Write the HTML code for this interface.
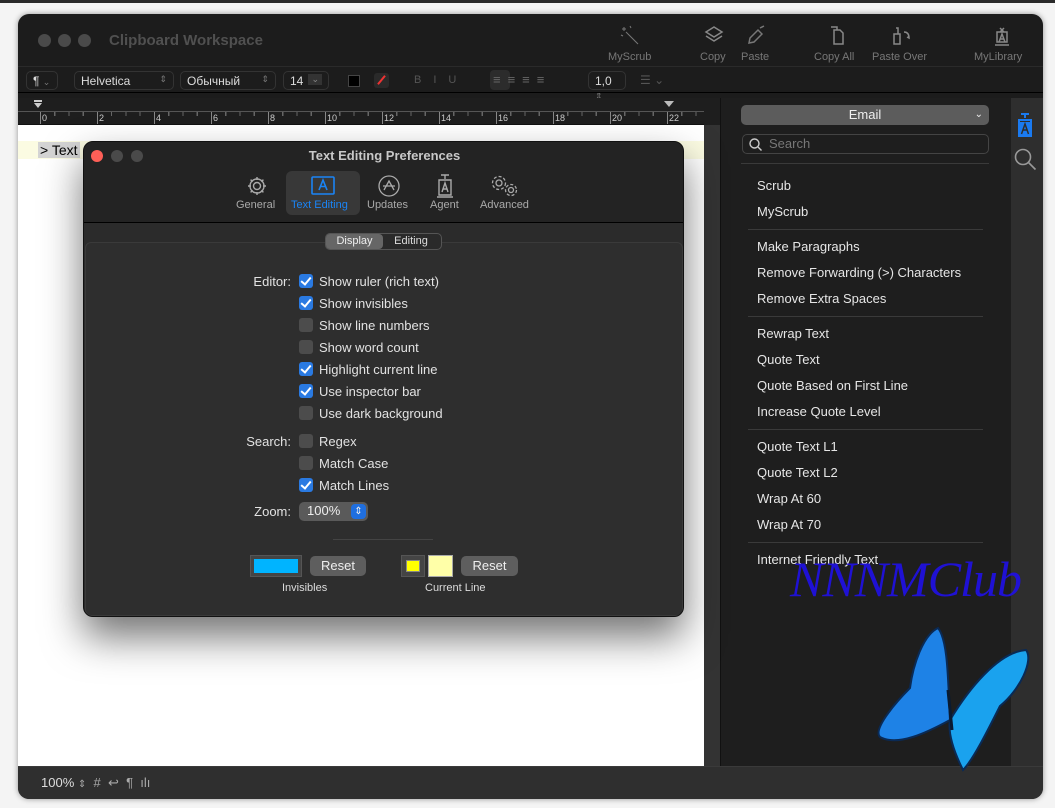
<!DOCTYPE html>
<html><head><meta charset="utf-8"><style>
*{box-sizing:border-box;margin:0;padding:0}
body{width:1055px;height:808px;background:#f4f4f4;position:relative;overflow:hidden;font-family:"Liberation Sans",sans-serif;color:#ddd}
.a{position:absolute}
.win{left:18px;top:14px;width:1025px;height:785px;border-radius:11px;background:#1c1c1c;overflow:hidden;box-shadow:0 0 6px rgba(0,0,0,.4)}
.tl{width:13px;height:13px;border-radius:50%;background:#4a4a4a}
.tb{font-size:11px;color:#777;text-align:center}
.ctl{border:1px solid #333;border-radius:5px;height:19px;font-size:12px;color:#ddd;padding:2px 6px;background:#1c1c1c}
.side div.i{font-size:13px;color:#e6e6e6;height:26px;line-height:26px;padding-left:36px}
.sep{height:1px;background:#3a3a3a;margin:4px 28px 4px 27px}
.cb{width:14px;height:14px;border-radius:3px;background:#4c4c4c;display:inline-block;vertical-align:-2px;margin-right:6px;position:relative}
.cb.on{background:#2a7ae2}
.cb.on:after{content:"";position:absolute;left:4px;top:1px;width:4px;height:8px;border:solid #fff;border-width:0 2px 2px 0;transform:rotate(40deg)}
.row{position:absolute;left:299px;font-size:13px;color:#e2e2e2}
.lab{position:absolute;font-size:13px;color:#e2e2e2;text-align:right;width:80px}
.btn{position:absolute;height:20px;background:#5e5e5e;border-radius:5px;font-size:13px;color:#eee;text-align:center;line-height:20px}
</style></head><body>
<div class="a" style="left:0;top:0;width:1055px;height:3px;background:#2a2a2a"></div>
<div class="a win">
  <div class="a tl" style="left:20px;top:20px"></div><div class="a tl" style="left:40px;top:20px"></div><div class="a tl" style="left:60px;top:20px"></div>
  <div class="a" style="left:91px;top:18px;font-size:15px;font-weight:bold;color:#505050">Clipboard Workspace</div>
  <div class="a tb" style="left:590px;top:37px">MyScrub</div>
  <div class="a tb" style="left:682px;top:37px">Copy</div>
  <div class="a tb" style="left:723px;top:37px">Paste</div>
  <div class="a tb" style="left:796px;top:37px">Copy All</div>
  <div class="a tb" style="left:854px;top:37px">Paste Over</div>
  <div class="a tb" style="left:956px;top:37px">MyLibrary</div>
  <svg class="a" style="left:600px;top:10px" width="24" height="24" stroke="#777" fill="none"><path d="M8 8l12 12M6 3v4M4 5h4M12 2l1 2M3 11l2 1"/></svg>
  <svg class="a" style="left:684px;top:10px" width="24" height="24" stroke="#888" fill="none" stroke-width="1.5"><path d="M12 3l8 5-8 5-8-5z M4 12l8 5 8-5"/></svg>
  <svg class="a" style="left:726px;top:10px" width="24" height="24" stroke="#777" fill="none" stroke-width="1.5"><path d="M6 14l8-8 4 4-8 8-5 1z M16 4l4-2"/></svg>
  <svg class="a" style="left:808px;top:10px" width="24" height="24" stroke="#888" fill="none" stroke-width="1.5"><path d="M8 6h6l3 3v11H8z M5 3h6v3"/></svg>
  <svg class="a" style="left:872px;top:10px" width="24" height="24" stroke="#888" fill="none" stroke-width="1.5"><path d="M4 10h6v10H4z M6 4h2v6 M14 8c4 0 5 3 5 6l-2-1"/></svg>
  <svg class="a" style="left:972px;top:10px" width="24" height="24" stroke="#888" fill="none" stroke-width="1.5"><path d="M7 8h10v10H7z M9 18l3-8 3 8 M10 15h4 M10 4l4 4M14 4l-4 4 M5 21h14"/></svg>
  <div class="a" style="left:0;top:52px;width:1025px;height:1px;background:#2a2a2a"></div>
  <div class="a ctl" style="left:8px;top:57px;width:32px">¶ <span style="color:#777;font-size:9px">⌄</span></div>
  <div class="a ctl" style="left:56px;top:57px;width:100px">Helvetica<span style="float:right;color:#777;font-size:9px">⇕</span></div>
  <div class="a ctl" style="left:162px;top:57px;width:96px">Обычный<span style="float:right;color:#777;font-size:9px">⇕</span></div>
  <div class="a ctl" style="left:265px;top:57px;width:46px">14<span style="float:right;background:#333;color:#888;font-size:9px;padding:0 3px">⌄</span></div>
  <div class="a" style="left:330px;top:61px;width:12px;height:12px;background:#000;border:1px solid #444"></div>
  <div class="a" style="left:356px;top:59px;width:15px;height:15px;background:#2a2a2a;border-radius:3px"><div style="margin:6px 2px;height:2px;background:#e33;transform:rotate(-50deg)"></div></div>
  <div class="a" style="left:396px;top:60px;font-size:11px;color:#555;letter-spacing:12px">BIU</div>
  <div class="a" style="left:472px;top:56px;width:20px;height:20px;background:#2c2c2c;border-radius:4px"></div>
  <div class="a" style="left:475px;top:58px;font-size:13px;color:#666;letter-spacing:7px">≡≡≡≡</div>
  <div class="a ctl" style="left:570px;top:57px;width:38px">1,0 <span style="color:#777;font-size:9px">⇕</span></div>
  <div class="a" style="left:622px;top:59px;font-size:12px;color:#555">☰ ⌄</div>
  <div class="a" style="left:0;top:78px;width:1025px;height:1px;background:#000"></div>
  <!-- ruler -->
  <div class="a" style="left:0;top:84px;width:702px;height:27px;background:#1e1e1e;border-bottom:1px solid #111">
    <div class="a" style="left:0;top:13px;width:702px;height:1px;background:#555"></div>
    <svg class="a" style="left:15px;top:2px" width="10" height="10"><path d="M1 0h8v2H1zM1 3h8l-4 5z" fill="#ccc"/></svg>
    <svg class="a" style="left:646px;top:3px" width="10" height="8"><path d="M0 0h10l-5 6z" fill="#bbb"/></svg>
    <div class="a" style="left:22px;top:14px;width:680px;height:4px;background:repeating-linear-gradient(90deg,#666 0 1px,transparent 1px 14.25px)"></div>
    <div class="a" style="left:22px;top:14px;width:680px;height:12px;background:repeating-linear-gradient(90deg,#888 0 1px,transparent 1px 57px)"></div>
    <div class="a" style="left:24px;top:15px;font-size:9px;color:#ccc">
      <span style="position:absolute;left:0">0</span><span style="position:absolute;left:57px">2</span><span style="position:absolute;left:114px">4</span><span style="position:absolute;left:171px">6</span><span style="position:absolute;left:228px">8</span><span style="position:absolute;left:285px">10</span><span style="position:absolute;left:342px">12</span><span style="position:absolute;left:399px">14</span><span style="position:absolute;left:456px">16</span><span style="position:absolute;left:513px">18</span><span style="position:absolute;left:570px">20</span><span style="position:absolute;left:627px">22</span>
    </div>
  </div>
  <div class="a" style="left:686px;top:84px;width:16px;height:27px;background:#1e1e1e"></div>
  <!-- editor -->
  <div class="a" style="left:0;top:111px;width:686px;height:641px;background:#fff"></div>
  <div class="a" style="left:0;top:127px;width:686px;height:18px;background:#fbfbe2"></div>
  <div class="a" style="left:20px;top:128px;background:#d4d4d4;color:#000;font-size:14px;padding:0 2px">&gt; Text</div>
  <div class="a" style="left:686px;top:111px;width:16px;height:641px;background:#333"></div>
  <div class="a" style="left:702px;top:84px;width:1px;height:668px;background:#111"></div>
  <!-- sidebar -->
  <div class="a side" style="left:703px;top:84px;width:290px;height:668px;background:#1e1e1e">
    <div style="margin:7px 0 0 20px;width:248px;height:20px;background:#5c5c5c;border-radius:5px;font-size:13px;color:#eee;text-align:center;line-height:20px;position:relative">Email<span style="position:absolute;right:6px;font-size:10px">⌄</span></div>
    <div style="margin:9px 0 0 21px;width:247px;height:20px;border:1px solid #444;border-radius:5px;font-size:13px;color:#777;line-height:18px;padding-left:26px;position:relative"><svg style="position:absolute;left:6px;top:3px" width="13" height="13" fill="none" stroke="#ccc" stroke-width="1.4"><circle cx="5.5" cy="5.5" r="4.5"/><path d="M9 9l3.5 3.5"/></svg>Search</div>
    <div class="sep" style="margin:9px 22px 9px 20px"></div>
    <div class="i">Scrub</div><div class="i">MyScrub</div>
    <div class="sep"></div>
    <div class="i">Make Paragraphs</div><div class="i">Remove Forwarding (&gt;) Characters</div><div class="i">Remove Extra Spaces</div>
    <div class="sep"></div>
    <div class="i">Rewrap Text</div><div class="i">Quote Text</div><div class="i">Quote Based on First Line</div><div class="i">Increase Quote Level</div>
    <div class="sep"></div>
    <div class="i">Quote Text L1</div><div class="i">Quote Text L2</div><div class="i">Wrap At 60</div><div class="i">Wrap At 70</div>
    <div class="sep"></div>
    <div class="i">Internet Friendly Text</div>
  </div>
  <div class="a" style="left:993px;top:84px;width:32px;height:668px;background:#2e2e2e"></div>
  <svg class="a" style="left:997px;top:98px" width="20" height="28"><path d="M6 2h8M10 2v4M4 8h12v16H4z" stroke="#1a7af0" stroke-width="2" fill="none"/><rect x="4" y="10" width="12" height="14" fill="#1a7af0"/><path d="M6.5 22l3.5-10 3.5 10M8 18h4" stroke="#2e2e2e" stroke-width="1.5" fill="none"/></svg>
  <svg class="a" style="left:996px;top:134px" width="24" height="24" fill="none" stroke="#999" stroke-width="1.6"><circle cx="9" cy="9" r="7.5"/><path d="M14.5 14.5l7 7"/></svg>
  <div class="a" style="left:0;top:752px;width:1025px;height:33px;background:#2f2f2f;border-top:1px solid #3a3a3a"></div>
  <div class="a" style="left:23px;top:761px;font-size:13px;color:#ddd">100% <span style="font-size:10px;color:#aaa">⇕</span> &nbsp;<span style="color:#aaa">#&nbsp; ↩&nbsp; ¶&nbsp; ılı</span></div>
</div>
<div class="a" style="left:790px;top:550px;font-family:'Liberation Serif',serif;font-style:italic;font-size:50px;color:#2010e8;opacity:.9;letter-spacing:-1px">NNNMClub</div>
<!-- butterfly -->
<svg class="a" style="left:868px;top:620px" width="175" height="160">
  <path d="M82 100C80 60 80 20 70 8C55 15 45 45 42 68C25 85 5 110 12 117C30 127 60 112 82 100z" fill="#1e82e6" stroke="#0a2a55" stroke-width="2"/>
  <path d="M82 100C100 70 130 32 158 30C166 40 152 70 132 86C120 110 105 140 95 150C85 130 80 112 82 100z" fill="#1aa2ee" stroke="#0a2a55" stroke-width="2"/>
  <path d="M80 70L84 110" stroke="#0a1a30" stroke-width="3"/>
</svg>
<!-- dialog -->
<div class="a" style="left:83px;top:141px;width:601px;height:476px;background:#2b2b2b;border:1px solid #111;border-radius:10px;box-shadow:0 20px 40px rgba(0,0,0,.55);overflow:hidden">
  <div class="a" style="left:0;top:0;width:601px;height:81px;background:#232323;border-bottom:1px solid #000"></div>
  <div class="a tl" style="left:7px;top:8px;width:12px;height:12px;background:#fe5f57"></div>
  <div class="a tl" style="left:27px;top:8px;width:12px;height:12px"></div>
  <div class="a tl" style="left:47px;top:8px;width:12px;height:12px"></div>
  <div class="a" style="left:0;top:6px;width:601px;text-align:center;font-size:13px;font-weight:bold;color:#c8c8c8">Text Editing Preferences</div>
  <div class="a" style="left:202px;top:29px;width:74px;height:44px;background:#383838;border-radius:6px"></div>
  <svg class="a" style="left:162px;top:33px" width="22" height="22" fill="none" stroke="#aaa" stroke-width="1.4"><circle cx="11" cy="11" r="3.5"/><path d="M11 2v3M11 17v3M2 11h3M17 11h3M4.6 4.6l2.1 2.1M15.3 15.3l2.1 2.1M4.6 17.4l2.1-2.1M15.3 6.7l2.1-2.1"/><circle cx="11" cy="11" r="7"/></svg>
  <svg class="a" style="left:227px;top:34px" width="24" height="20" fill="none" stroke="#1a84f5" stroke-width="1.6"><rect x="1" y="1" width="22" height="17" rx="1"/><path d="M8 14l4-10 4 10M9.5 10.5h5"/></svg>
  <svg class="a" style="left:293px;top:32px" width="24" height="24" fill="none" stroke="#aaa" stroke-width="1.3"><circle cx="12" cy="12" r="10"/><path d="M7 16l5-9 5 9M6 12h12"/></svg>
  <svg class="a" style="left:351px;top:31px" width="20" height="26" fill="none" stroke="#aaa" stroke-width="1.4"><path d="M6 2h8M10 2v4M4 7h12v15H4z M7 19l3-9 3 9M8 16h4M2 24h16"/></svg>
  <svg class="a" style="left:406px;top:32px" width="30" height="24" fill="none" stroke="#aaa" stroke-width="1.3"><circle cx="9" cy="9" r="3"/><circle cx="9" cy="9" r="6.5" stroke-dasharray="3 2"/><circle cx="21" cy="16" r="2.5"/><circle cx="21" cy="16" r="5.5" stroke-dasharray="3 2"/></svg>
  <div class="a" style="top:57px;left:152px;font-size:11px;color:#aaa">General</div>
  <div class="a" style="top:57px;left:207px;font-size:11px;color:#1a84f5">Text Editing</div>
  <div class="a" style="top:57px;left:283px;font-size:11px;color:#aaa">Updates</div>
  <div class="a" style="top:57px;left:346px;font-size:11px;color:#aaa">Agent</div>
  <div class="a" style="top:57px;left:396px;font-size:11px;color:#aaa">Advanced</div>
  <div class="a" style="left:1px;top:100px;width:598px;height:374px;background:#2e2e2e;border:1px solid #3a3a3a;border-radius:6px"></div>
  <div class="a" style="left:241px;top:91px;width:117px;height:17px;border:1px solid #555;border-radius:5px;background:#2a2a2a;font-size:11px;line-height:15px"><span style="display:inline-block;width:57px;height:15px;background:#666;border-radius:4px;text-align:center;color:#eee">Display</span><span style="display:inline-block;width:56px;text-align:center;color:#ddd">Editing</span></div>
</div>
<div class="lab" style="left:211px;top:274px">Editor:</div>
<div class="row" style="top:274px"><span class="cb on"></span>Show ruler (rich text)</div>
<div class="row" style="top:296px"><span class="cb on"></span>Show invisibles</div>
<div class="row" style="top:318px"><span class="cb"></span>Show line numbers</div>
<div class="row" style="top:340px"><span class="cb"></span>Show word count</div>
<div class="row" style="top:362px"><span class="cb on"></span>Highlight current line</div>
<div class="row" style="top:384px"><span class="cb on"></span>Use inspector bar</div>
<div class="row" style="top:406px"><span class="cb"></span>Use dark background</div>
<div class="lab" style="left:211px;top:434px">Search:</div>
<div class="row" style="top:434px"><span class="cb"></span>Regex</div>
<div class="row" style="top:456px"><span class="cb"></span>Match Case</div>
<div class="row" style="top:478px"><span class="cb on"></span>Match Lines</div>
<div class="lab" style="left:211px;top:504px">Zoom:</div>
<div class="a" style="left:299px;top:502px;width:69px;height:19px;background:#5a5a5a;border-radius:5px;font-size:13px;color:#eee;padding:1px 0 0 8px">100%<span style="position:absolute;right:2px;top:2px;width:15px;height:15px;background:#1f6fe0;border-radius:4px;font-size:10px;text-align:center;line-height:15px">⇕</span></div>
<div class="a" style="left:333px;top:539px;width:100px;height:1px;background:#444"></div>
<div class="a" style="left:250px;top:555px;width:52px;height:22px;border:1px solid #555;background:#444;padding:3px"><div style="width:44px;height:14px;background:#00b4ff"></div></div>
<div class="btn" style="left:310px;top:556px;width:56px">Reset</div>
<div class="a" style="left:282px;top:582px;font-size:11px;color:#ddd">Invisibles</div>
<div class="a" style="left:401px;top:555px;width:24px;height:22px;border:1px solid #555;background:#444;padding:4px"><div style="width:14px;height:12px;background:#ff0;border:1px solid #888"></div></div>
<div class="a" style="left:428px;top:555px;width:25px;height:22px;border:1px solid #aaa;background:#ffffa8"></div>
<div class="btn" style="left:461px;top:556px;width:57px">Reset</div>
<div class="a" style="left:425px;top:582px;font-size:11px;color:#ddd">Current Line</div>
</body></html>
